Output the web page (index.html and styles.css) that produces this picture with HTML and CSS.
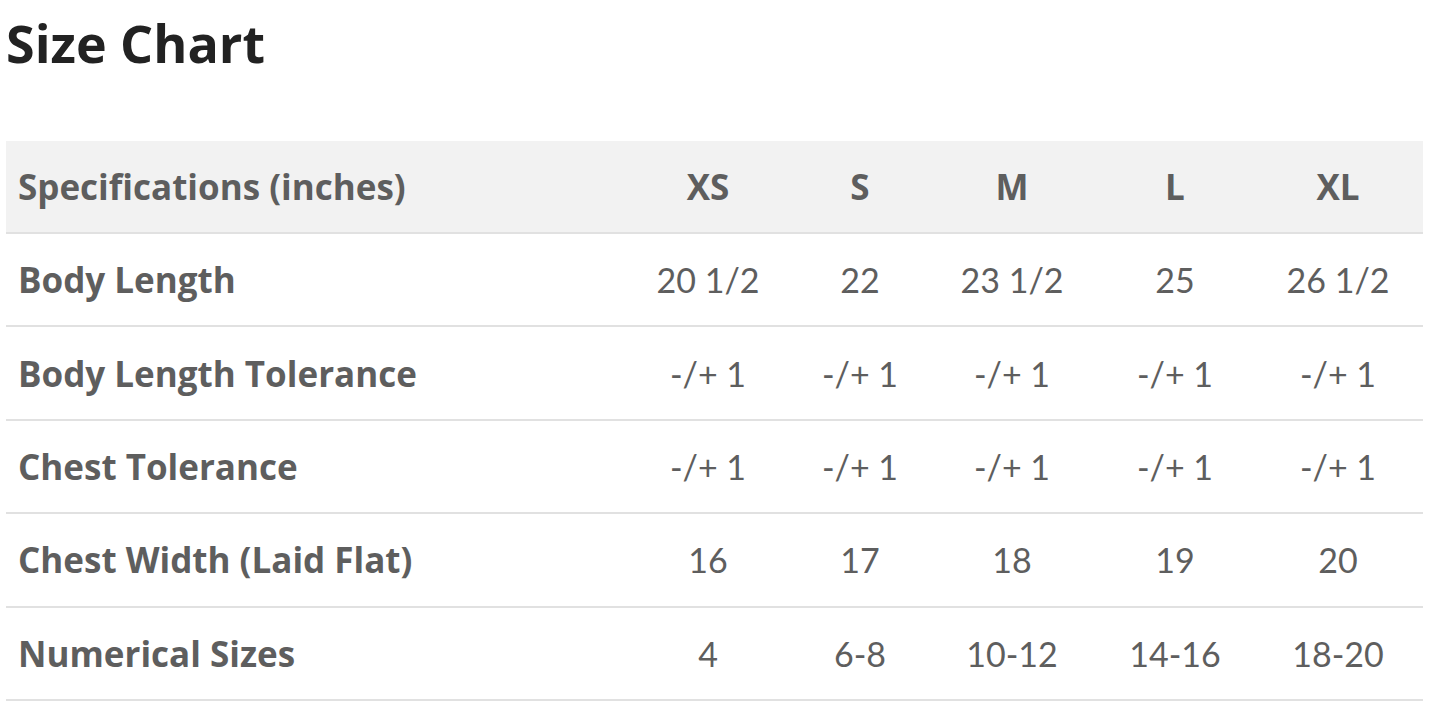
FILE: index.html
```html
<!DOCTYPE html>
<html lang="en">
<head>
<meta charset="utf-8">
<title>Size Chart</title>
<link rel="stylesheet" href="styles.css">
</head>
<body>
<main class="page">
  <h1 class="title">Size Chart</h1>
  <div class="chart" role="table">
    <div class="row head" role="row">
      <div class="cell label">Specifications (inches)</div>
      <div class="cell">XS</div>
      <div class="cell">S</div>
      <div class="cell">M</div>
      <div class="cell">L</div>
      <div class="cell">XL</div>
    </div>
    <div class="row" role="row">
      <div class="cell label">Body Length</div>
      <div class="cell">20 1/2</div>
      <div class="cell">22</div>
      <div class="cell">23 1/2</div>
      <div class="cell">25</div>
      <div class="cell">26 1/2</div>
    </div>
    <div class="row" role="row">
      <div class="cell label">Body Length Tolerance</div>
      <div class="cell">-/+ 1</div>
      <div class="cell">-/+ 1</div>
      <div class="cell">-/+ 1</div>
      <div class="cell">-/+ 1</div>
      <div class="cell">-/+ 1</div>
    </div>
    <div class="row" role="row">
      <div class="cell label">Chest Tolerance</div>
      <div class="cell">-/+ 1</div>
      <div class="cell">-/+ 1</div>
      <div class="cell">-/+ 1</div>
      <div class="cell">-/+ 1</div>
      <div class="cell">-/+ 1</div>
    </div>
    <div class="row" role="row">
      <div class="cell label">Chest Width (Laid Flat)</div>
      <div class="cell">16</div>
      <div class="cell">17</div>
      <div class="cell">18</div>
      <div class="cell">19</div>
      <div class="cell">20</div>
    </div>
    <div class="row" role="row">
      <div class="cell label">Numerical Sizes</div>
      <div class="cell">4</div>
      <div class="cell">6-8</div>
      <div class="cell">10-12</div>
      <div class="cell">14-16</div>
      <div class="cell">18-20</div>
    </div>
  </div>
</main>
</body>
</html>
```
FILE: styles.css
```css
html, body {
  margin: 0;
  padding: 0;
  background: #ffffff;
}

.page {
  padding: 0 22px 0 6px;
  font-family: Lato, "Noto Sans", sans-serif;
}

.title {
  margin: 0;
  padding-top: 15px;
  font-family: "Open Sans", Lato, sans-serif;
  font-size: 52px;
  line-height: 56px;
  font-weight: 700;
  color: #222222;
}

.chart {
  margin-top: 70px;
  width: 1417px;
}

.row {
  display: grid;
  grid-template-columns: 617px 170px 134px 170px 156px 170px;
  height: 93.4px;
  box-sizing: border-box;
  border-bottom: 2px solid #e1e1e1;
  color: #5e5e5e;
}

.row.head {
  background: #f2f2f2;
  height: 93px;
}

.cell {
  display: flex;
  align-items: center;
  justify-content: center;
  font-size: 34px;
  font-weight: 400;
}

.head .cell {
  font-family: "Open Sans", Lato, sans-serif;
  font-weight: 700;
  font-size: 35px;
}

.cell.label {
  justify-content: flex-start;
  padding-left: 12px;
  font-family: "Open Sans", Lato, sans-serif;
  font-weight: 700;
  font-size: 35px;
}
```
